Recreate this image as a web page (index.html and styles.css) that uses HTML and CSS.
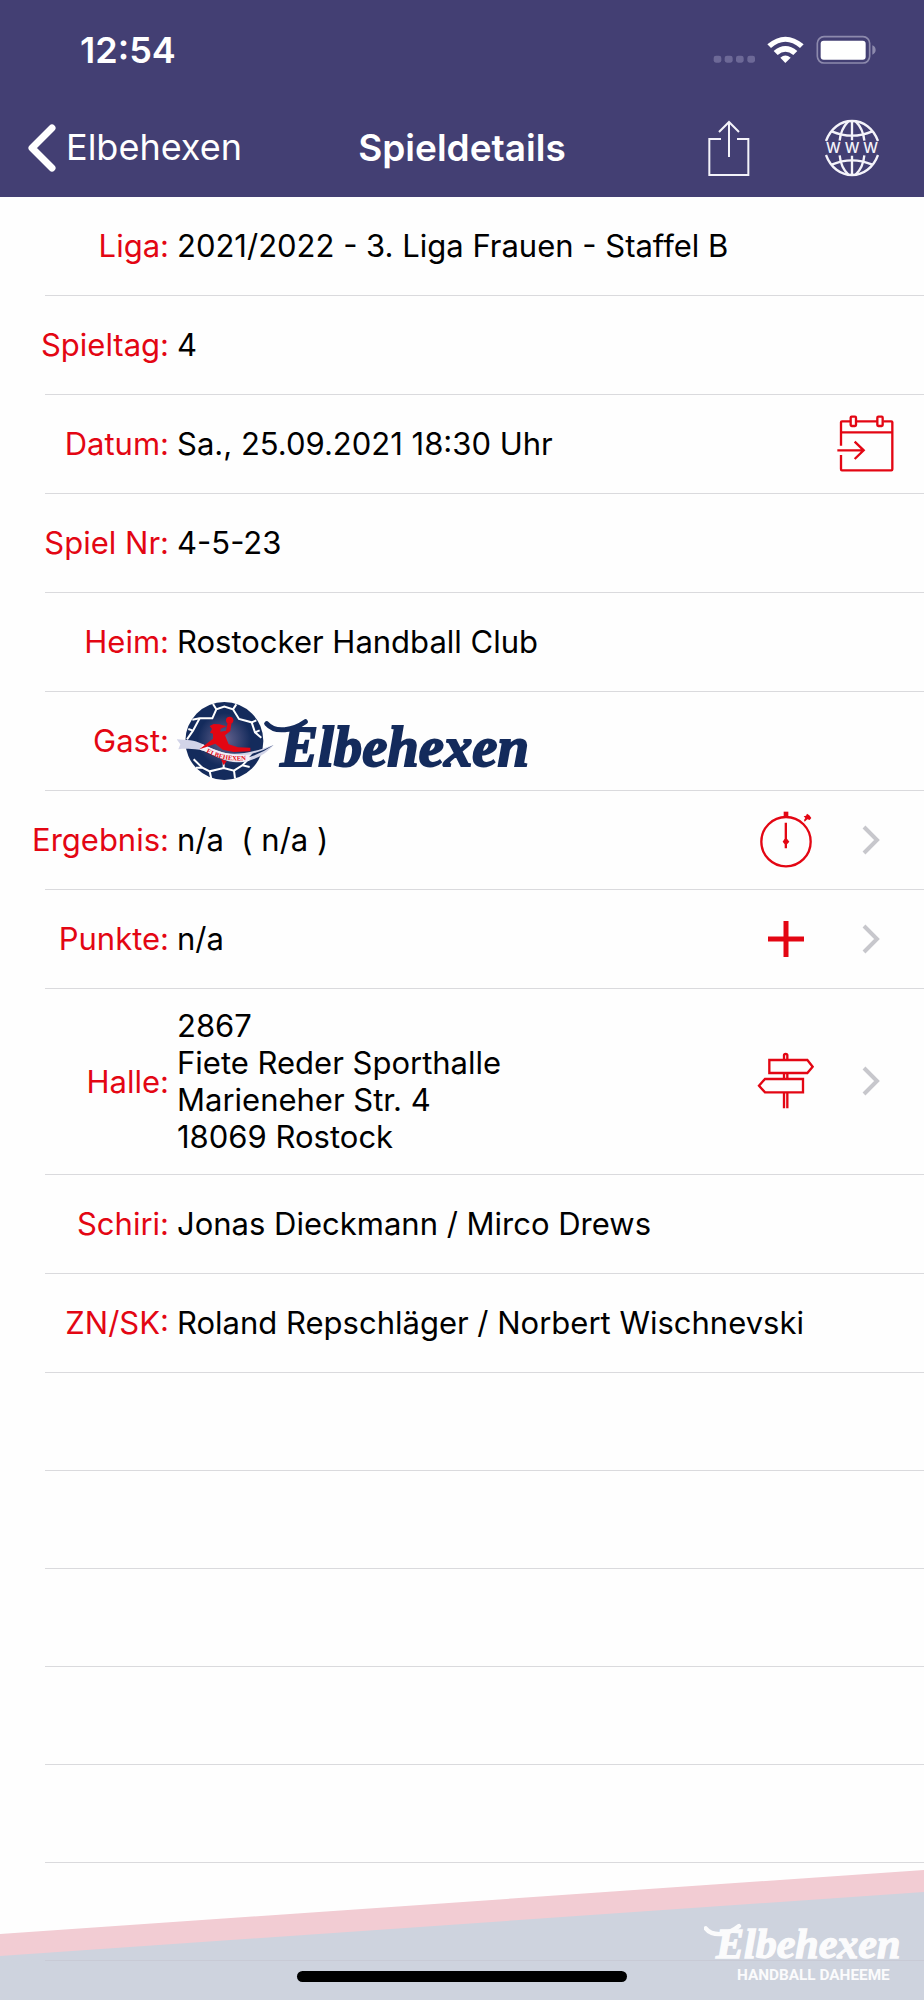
FILE: index.html
```html
<!DOCTYPE html>
<html lang="de">
<head>
  <meta charset="UTF-8" />
  <meta name="viewport" content="width=device-width, initial-scale=1.0" />
  <title>Spieldetails</title>
  <link rel="stylesheet" href="styles.css">
</head>
<body>
  <header class="app-header">
    <div class="status-bar">
      <span class="time">12:54</span>
      <svg class="status-icons" width="164" height="30" viewBox="754 106 492 90" aria-hidden="true">
        <g fill="#6d6997">
          <rect x="756" y="168" width="23" height="21" rx="7"/>
          <rect x="789" y="168" width="24" height="21" rx="7"/>
          <rect x="823" y="168" width="23" height="21" rx="7"/>
          <rect x="857" y="168" width="23" height="21" rx="7"/>
        </g>
        <g fill="#fff">
          <path d="M917 134Q971 88 1026 134L1015 145Q971 108 928 145Z"/>
          <path d="M936 154Q971 124 1007 154L995 166Q971 146 948 166Z"/>
          <path d="M956 174Q971 161 987 174L971 190Z"/>
          <rect x="1077" y="123" width="135" height="57" rx="9"/>
        </g>
        <rect x="1067" y="111" width="157" height="79" rx="20" fill="none" stroke="#8d8aad" stroke-width="5"/>
        <path d="M1232 137Q1242 141 1242 151Q1242 161 1232 165Z" fill="#8d8aad"/>
      </svg>
    </div>
    <nav class="nav-bar">
      <button type="button" class="back">
        <svg width="28" height="48" viewBox="0 0 28 48" aria-hidden="true">
          <path d="M24 4L4 24L24 44" fill="none" stroke="#fff" stroke-width="7" stroke-linecap="round" stroke-linejoin="round"/>
        </svg>
        <span>Elbehexen</span>
      </button>
      <h1>Spieldetails</h1>
      <div class="nav-actions">
        <button type="button" aria-label="Teilen">
          <svg width="44" height="58" viewBox="734 354 132 174" fill="none" stroke="#f4f3fa" stroke-width="6">
            <path d="M776 414H741V522H858V414H824"/>
            <path d="M800 468V364M770 393L800 363L830 393"/>
          </svg>
        </button>
        <button type="button" aria-label="Webseite">
          <svg width="56" height="58" viewBox="1084 354 168 174" fill="none" stroke="#f4f3fa" stroke-width="7">
            <path d="M1090 420C1104 382 1134 360 1168 360C1202 360 1232 382 1246 420"/>
            <path d="M1090 462C1104 500 1134 522 1168 522C1202 522 1232 500 1246 462"/>
            <path d="M1168 358V418M1168 464V524"/>
            <path d="M1157 361C1142 376 1133 396 1131 419M1179 361C1194 376 1203 396 1205 419"/>
            <path d="M1157 521C1142 506 1133 486 1131 463M1179 521C1194 506 1203 486 1205 463"/>
            <path d="M1107 391Q1168 417 1229 391M1107 491Q1168 465 1229 491"/>
            <text class="www" x="1168" y="457" text-anchor="middle">W W W</text>
          </svg>
        </button>
      </div>
    </nav>
  </header>

  <main>
    <dl class="details">
      <div class="row">
        <dt>Liga:</dt>
        <dd>2021/2022 - 3. Liga Frauen - Staffel B</dd>
      </div>
      <div class="row">
        <dt>Spieltag:</dt>
        <dd>4</dd>
      </div>
      <div class="row">
        <dt>Datum:</dt>
        <dd>Sa., 25.09.2021 18:30 Uhr</dd>
        <dd class="actions calendar">
          <button type="button" aria-label="In Kalender eintragen">
            <svg width="58" height="58" viewBox="322 45 174 174" fill="none" stroke="#e30613" stroke-width="7">
              <path d="M334 137V67Q334 64 337 64H362M380 64H443M461 64H485Q488 64 488 67V208Q488 211 485 211H337Q334 211 334 208V165M334 97H488"/>
              <rect x="363" y="50" width="16" height="28" rx="3"/>
              <rect x="443" y="50" width="16" height="28" rx="3"/>
              <path d="M323 151H401M375 125L402 151L375 177"/>
            </svg>
          </button>
        </dd>
      </div>
      <div class="row">
        <dt>Spiel Nr:</dt>
        <dd>4-5-23</dd>
      </div>
      <div class="row">
        <dt>Heim:</dt>
        <dd>Rostocker Handball Club</dd>
      </div>
      <div class="row">
        <dt>Gast:</dt>
        <dd>
          <svg class="club-logo" width="356" height="86" viewBox="50 21 1068 258">
            <defs>
              <radialGradient id="ball">
                <stop offset="0" stop-color="#686590"/>
                <stop offset="1" stop-color="#142b5c"/>
              </radialGradient>
            </defs>
            <circle cx="192" cy="150" r="117" fill="#142b5c"/>
            <circle cx="192" cy="146" r="80" fill="url(#ball)"/>
            <g fill="none" stroke="#fff" stroke-width="6">
              <path d="M96 86L118 82L156 82L168 55L192 47L218 55L236 84L274 94L288 88"/>
              <path d="M118 82L98 119L80 145M98 119L84 114M274 94L284 124L303 140M284 124L298 118"/>
              <path d="M168 55L158 39M218 55L228 40M100 205L126 230L148 241L190 231L221 239L246 223L281 187"/>
              <path d="M126 230L107 230M148 241L153 264M190 231V209M221 239L224 262M246 223L268 228"/>
            </g>
            <path d="M49 145C82 149 98 145 128 160C184 188 220 205 340 162C315 190 285 208 242 214C180 215 151 181 117 176C89 174 75 172 54 175L60 160Z" fill="#d2d4e8"/>
            <path d="M127 160C184 188 223 197 276 190L266 210C198 221 154 186 119 176Z" fill="#f3f1f8"/>
            <path d="M266 199Q304 187 340 162Q312 178 276 188Z" fill="#142b5c"/>
            <g fill="#e30613">
              <circle cx="208" cy="88" r="11"/>
              <path d="M202 96L213 99L210 120L194 133L205 160L233 169L270 170V181L220 183L187 176L165 158L138 168L117 175L158 143L158 128L149 125L155 114L148 105L160 99L177 100L199 106L181 113L180 122L197 119Z"/>
              <path d="M182 205L199 210L190 223Z"/>
            </g>
            <path id="ribbon" d="M137 184Q190 214 258 207" fill="none"/>
            <text class="ribbon-text"><textPath href="#ribbon">ELBEHEXEN</textPath></text>
            <path d="M319 98Q338 120 374 116Q407 112 435 92" fill="none" stroke="#142b5c" stroke-width="15" stroke-linecap="round"/>
            <text class="lettering" x="360" y="224">Elbehexen</text>
          </svg>
        </dd>
      </div>
      <div class="row">
        <dt>Ergebnis:</dt>
        <dd>n/a&nbsp; ( n/a )</dd>
        <dd class="actions">
          <button type="button" aria-label="Ergebnis melden">
            <svg width="58" height="60" viewBox="80 60 174 180">
              <circle cx="167" cy="155" r="74" fill="none" stroke="#e30613" stroke-width="7"/>
              <g fill="#e30613">
                <path d="M160 65H174V81H160Z"/>
                <path d="M220 79L227 77L230 71L237 76L243 84L238 90L231 88L223 95L221 90L225 84Z"/>
                <path d="M163 98H170V146L177 155L170 163V175H163V163L157 155L163 146Z"/>
              </g>
            </svg>
          </button>
          <svg class="chevron" width="18" height="30" viewBox="0 0 18 30" aria-hidden="true"><path d="M2 2L15 15L2 28"/></svg>
        </dd>
      </div>
      <div class="row">
        <dt>Punkte:</dt>
        <dd>n/a</dd>
        <dd class="actions">
          <button type="button" aria-label="Punkte hinzufügen">
            <svg width="58" height="58" viewBox="0 0 58 58">
              <path d="M29 11V47M11 29H47" stroke="#e30613" stroke-width="5"/>
            </svg>
          </button>
          <svg class="chevron" width="18" height="30" viewBox="0 0 18 30" aria-hidden="true"><path d="M2 2L15 15L2 28"/></svg>
        </dd>
      </div>
      <div class="row">
        <dt>Halle:</dt>
        <dd>2867<br>Fiete Reder Sporthalle<br>Marieneher Str. 4<br>18069 Rostock</dd>
        <dd class="actions">
          <button type="button" aria-label="Route anzeigen">
            <svg width="58" height="58" viewBox="79 69 174 174" fill="none" stroke="#e30613" stroke-width="7">
              <path d="M160 91V79Q160 75 165 75Q170 75 170 79V91M160 133V149M170 133V149M160 191V238M170 191V238"/>
              <path d="M116 93H230L246 113L230 132H116Z"/>
              <path d="M217 150H103L85 170L103 190H217Z"/>
            </svg>
          </button>
          <svg class="chevron" width="18" height="30" viewBox="0 0 18 30" aria-hidden="true"><path d="M2 2L15 15L2 28"/></svg>
        </dd>
      </div>
      <div class="row">
        <dt>Schiri:</dt>
        <dd>Jonas Dieckmann / Mirco Drews</dd>
      </div>
      <div class="row">
        <dt>ZN/SK:</dt>
        <dd>Roland Repschläger / Norbert Wischnevski</dd>
      </div>
    </dl>
    <div class="empty-rows">
      <div></div>
      <div></div>
      <div></div>
      <div></div>
      <div></div>
      <div></div>
    </div>
  </main>

  <footer class="app-footer">
    <svg class="stripes" viewBox="0 0 924 130" preserveAspectRatio="none" aria-hidden="true">
      <path d="M0 64L924 0V130H0Z" fill="#f2ccd3"/>
      <path d="M0 86L924 22V130H0Z" fill="#ced3de"/>
    </svg>
    <svg class="footer-logo" width="204" height="66" viewBox="130 170 612 198">
      <path d="M135 204Q150 224 185 221Q211 216 235 197" fill="none" stroke="#fbfbfc" stroke-width="13" stroke-linecap="round"/>
      <text class="lettering" x="166" y="294">Elbehexen</text>
      <text class="claim" x="458" y="359" text-anchor="middle">HANDBALL DAHEEME</text>
    </svg>
    <div class="home-indicator"></div>
  </footer>
</body>
</html>
```
FILE: styles.css
```css
* {
  box-sizing: border-box;
  margin: 0;
  padding: 0;
}
body {
  position: relative;
  min-height: 100vh;
  overflow-x: hidden;
  background: #fefefe;
  color: #000;
  font-family: Inter, sans-serif;
  font-size: 31px;
  line-height: 37px;
}
svg {
  display: block;
  flex-shrink: 0;
}
button {
  background: none;
  border: none;
  color: inherit;
  font: inherit;
  cursor: pointer;
}

/* header */
.app-header {
  background: #433f73;
  color: #fff;
}
.status-bar {
  display: flex;
  justify-content: space-between;
  align-items: center;
  height: 100px;
  padding: 0 47px 0 80px;
}
.time {
  font-size: 36px;
  font-weight: 600;
}
.nav-bar {
  display: grid;
  grid-template-columns: 1fr auto 1fr;
  align-items: center;
  height: 97px;
  padding: 0 28px 2px;
}
.back {
  display: flex;
  align-items: center;
  gap: 10px;
  font-size: 36px;
  font-weight: 400;
}
h1 {
  font-size: 37px;
  font-weight: 600;
}
.nav-actions {
  display: flex;
  justify-content: flex-end;
  gap: 73px;
  padding-right: 16px;
}
.www {
  fill: #f4f3fa;
  stroke: none;
  font-size: 44px;
  font-weight: 500;
}

/* detail rows */
.row {
  position: relative;
  display: flex;
  align-items: center;
  min-height: 99px;
  padding: 18px 0 20px;
}
.row::after {
  content: "";
  position: absolute;
  left: 45px;
  right: 0;
  bottom: 0;
  height: 1px;
  background: #dadadd;
}
dt {
  width: 169px;
  flex-shrink: 0;
  margin-right: 8px;
  color: #e30613;
  text-align: right;
}
.club-logo {
  margin: -13px 0;
}
.actions {
  display: flex;
  align-items: center;
  gap: 47px;
  margin-left: auto;
  padding-right: 44px;
}
.calendar {
  padding-right: 29px;
}
.chevron {
  fill: none;
  stroke: #c7c7cc;
  stroke-width: 4;
}
.empty-rows div {
  position: relative;
  height: 98px;
  margin-left: 45px;
  border-bottom: 1px solid #dadadd;
}
.empty-rows div:last-child {
  z-index: 1;
  border-color: #c8cad5;
}

/* logo lettering */
.lettering {
  font-family: "Liberation Serif", serif;
  font-style: italic;
  font-weight: 700;
}
.club-logo .lettering {
  fill: #142b5c;
  stroke: #142b5c;
  stroke-width: 6;
  font-size: 170px;
}
.ribbon-text {
  fill: #e30613;
  font-family: "Liberation Serif", serif;
  font-size: 20px;
  font-weight: 700;
}
.footer-logo .lettering {
  fill: #fbfbfc;
  stroke: #fbfbfc;
  stroke-width: 4;
  font-size: 126px;
}
.claim {
  fill: #fbfbfc;
  font-family: Roboto, sans-serif;
  font-size: 46px;
  font-weight: 700;
}

/* footer lies over the last rows */
.app-footer {
  position: absolute;
  left: 0;
  right: 0;
  bottom: 0;
  height: 130px;
}
.stripes {
  width: 100%;
  height: 100%;
}
.footer-logo {
  position: absolute;
  right: 16px;
  bottom: 17px;
}
.home-indicator {
  position: absolute;
  left: 50%;
  bottom: 18px;
  width: 330px;
  height: 11px;
  margin-left: -165px;
  border-radius: 6px;
  background: #000;
}
```
